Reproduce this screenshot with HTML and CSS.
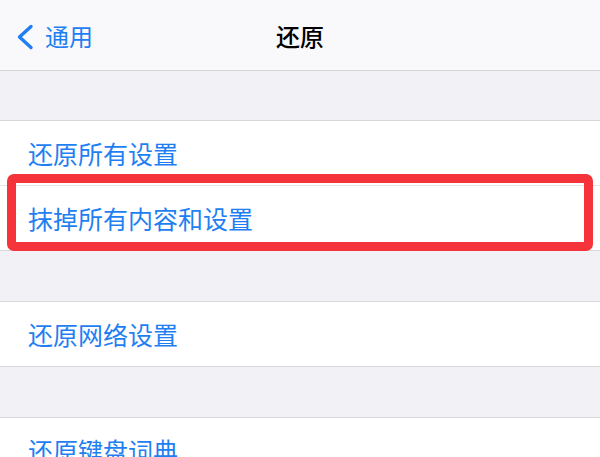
FILE: index.html
```html
<!DOCTYPE html>
<html lang="zh-CN">
<head>
<meta charset="utf-8">
<link rel="stylesheet" href="styles.css">
</head>
<body>
<div class="screen">
  <header class="nav">
    <div class="back">
      <svg class="chev" viewBox="0 0 18 26" width="18" height="26">
        <path d="M15 2.5 L3.5 13 L15 23.5" fill="none" stroke="#1f7ff2" stroke-width="3.4" stroke-linecap="round" stroke-linejoin="round"/>
      </svg>
      <span class="back-text">通用</span>
    </div>
    <div class="title">还原</div>
  </header>
  <div class="gap first"></div>
  <section class="group">
    <div class="row">还原所有设置</div>
    <div class="row sep">抹掉所有内容和设置<div class="mark"></div></div>
  </section>
  <div class="gap"></div>
  <section class="group">
    <div class="row">还原网络设置</div>
  </section>
  <div class="gap"></div>
  <section class="group">
    <div class="row">还原键盘词典</div>
  </section>
</div>
</body>
</html>
```

FILE: styles.css
```css
html, body {
  margin: 0;
  padding: 0;
}
body {
  width: 600px;
  height: 457px;
  overflow: hidden;
  background: #f2f2f6;
  font-family: "Noto Sans CJK SC", "Noto Sans", sans-serif;
}
.screen {
  display: flex;
  flex-direction: column;
}
.nav {
  height: 70px;
  background: #f9f9fb;
  border-bottom: 1px solid #d6d6da;
  display: flex;
  align-items: center;
  justify-content: center;
  position: relative;
}
.back {
  position: absolute;
  left: 16px;
  top: 0;
  height: 70px;
  display: flex;
  align-items: center;
  gap: 11px;
  color: #1f7ff2;
}
.chev {
  display: block;
  margin-top: 4px;
}
.back-text {
  font-size: 24px;
  line-height: 1;
  margin-top: 2px;
}
.title {
  font-size: 24px;
  font-weight: 500;
  color: #000;
  line-height: 1;
  margin-top: 2px;
}
.gap {
  height: 50px;
  background: #f2f2f6;
}
.gap.first {
  height: 49px;
}
.group {
  background: #fff;
  border-top: 1px solid #d8d8dc;
  border-bottom: 1px solid #d8d8dc;
}
.row {
  height: 64px;
  display: flex;
  align-items: center;
  padding-left: 28px;
  font-size: 25px;
  color: #1f7ff2;
  position: relative;
}
.row.sep {
  border-top: 1px solid #e4e4e8;
}
.mark {
  position: absolute;
  left: 7px;
  right: 7px;
  top: -12px;
  bottom: -1px;
  border: 9px solid #f5333b;
  border-radius: 7px;
  pointer-events: none;
}
```
